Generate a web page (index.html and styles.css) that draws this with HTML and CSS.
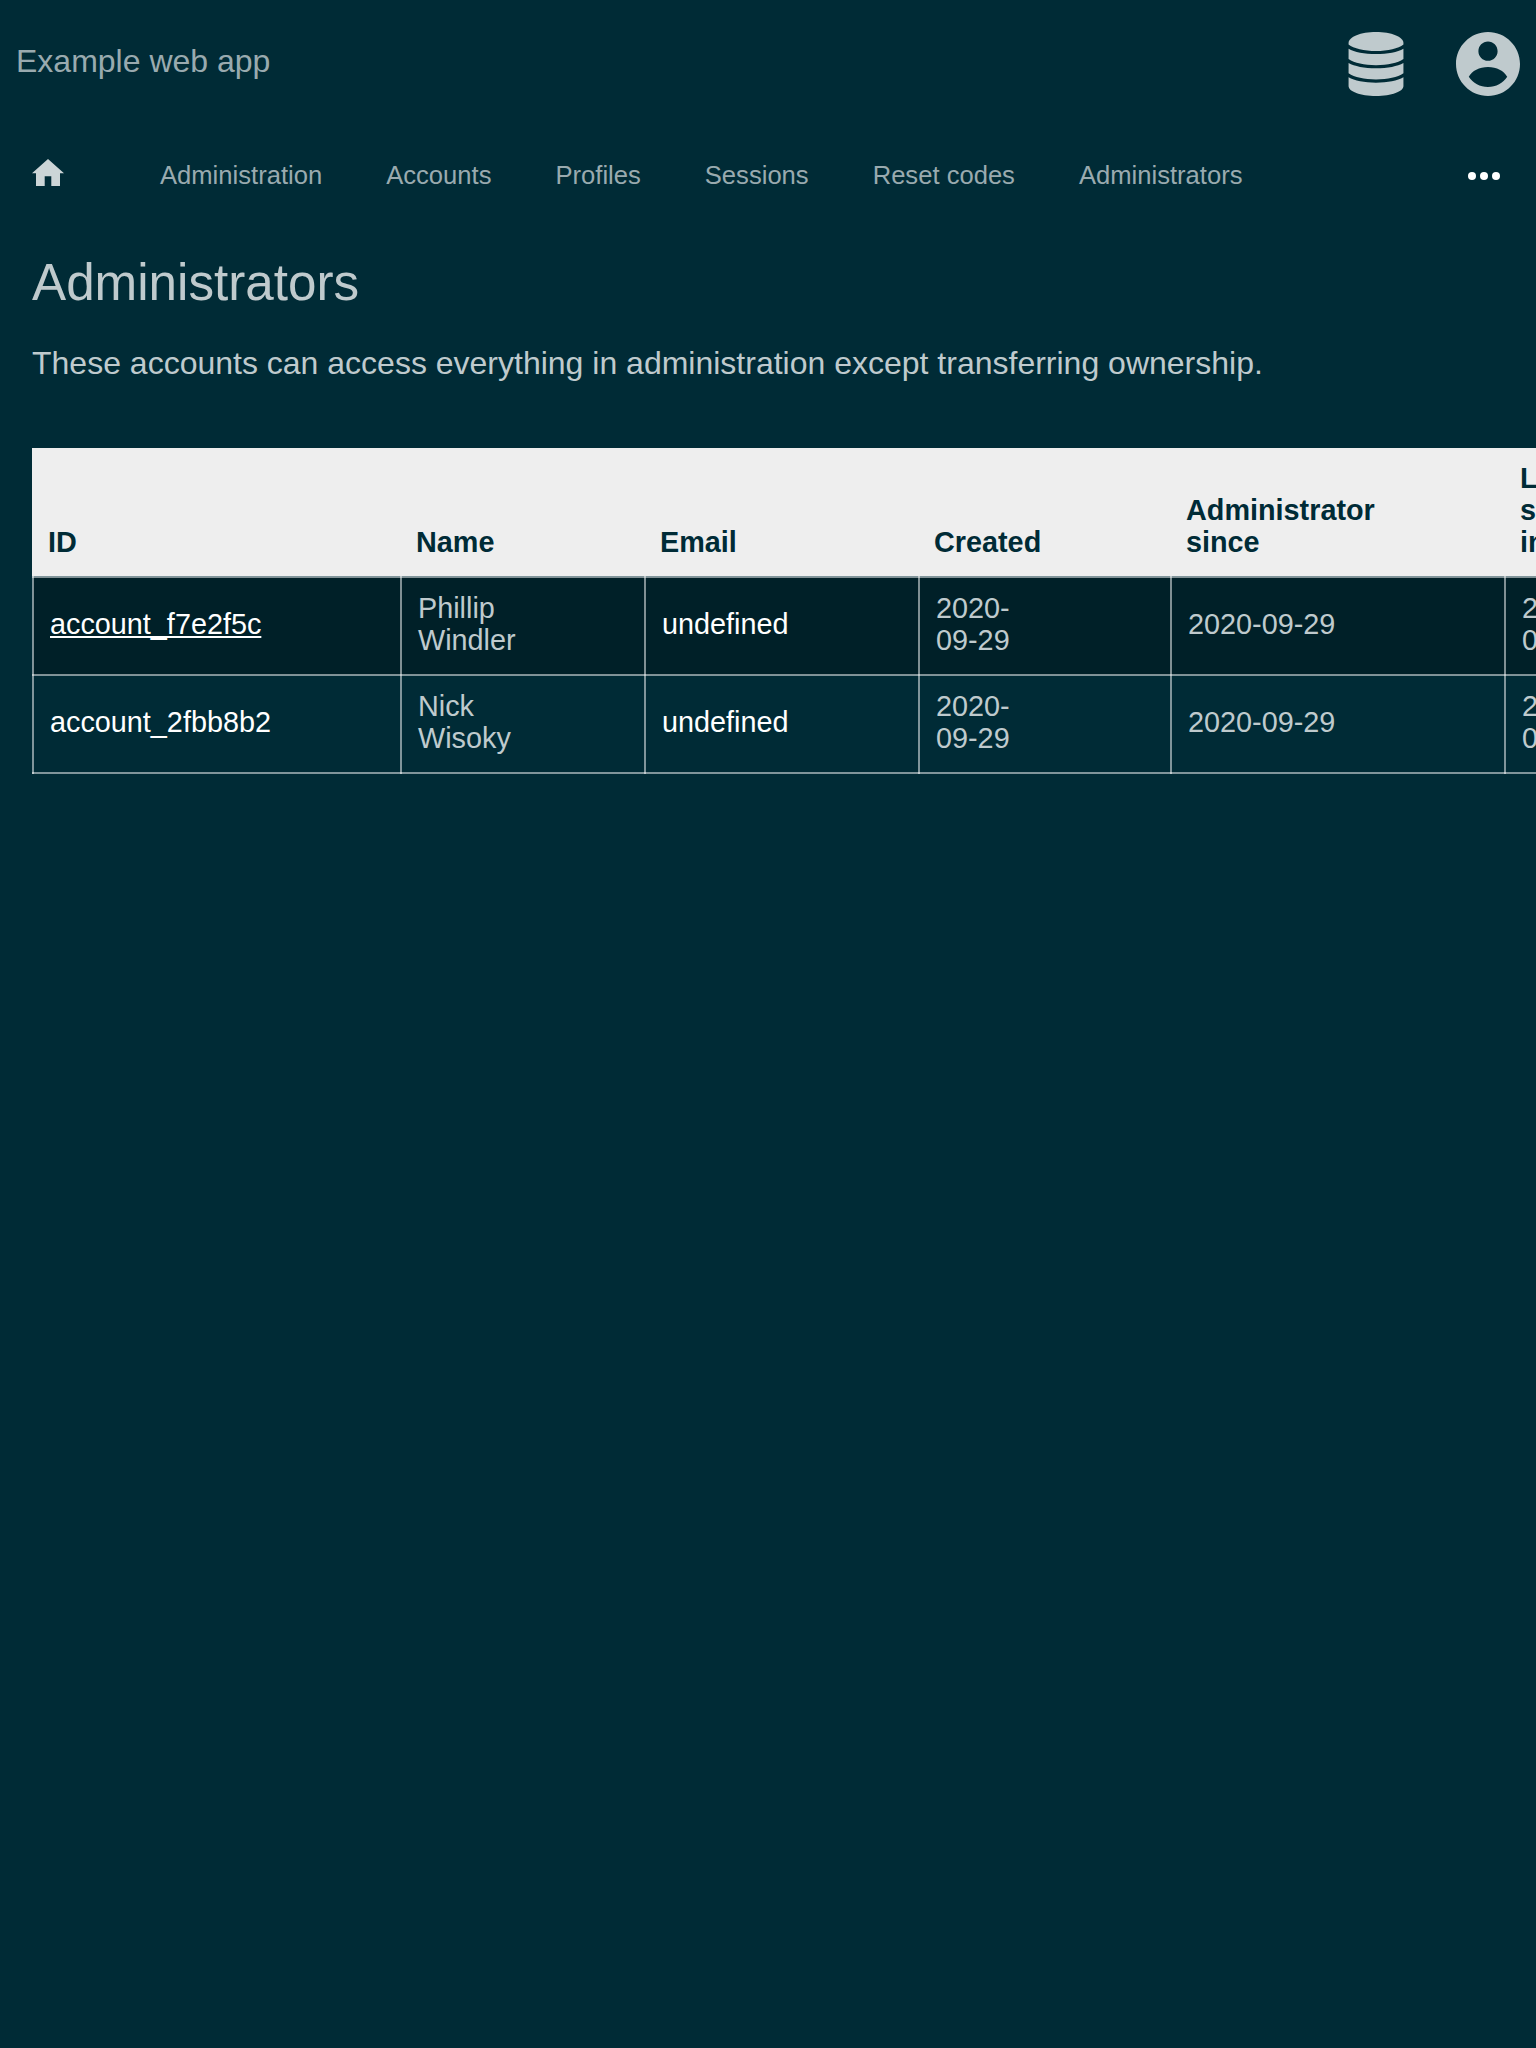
FILE: index.html
```html
<!DOCTYPE html>
<html lang="en">
<head>
<meta charset="utf-8">
<title>Administrators</title>
<link rel="stylesheet" href="styles.css">
</head>
<body>
<header class="header">
  <a class="brand">Example web app</a>
  <div class="menus">
    <svg class="icon-database" viewBox="-0.580 0 57.160 64" preserveAspectRatio="none"><path d="M0 11C0 4.800 12.500 0 28 0S56 4.800 56 11V12.500C51 16.500 40 19 28 19S5 16.500 0 12.500Z"/><path d="M0 16.700C6 20 16 22 28 22S50 20 56 16.700V27C50 31 40 33.200 28 33.200S6 31 0 27Z"/><path d="M0 31C6 34.300 16 36.300 28 36.300S50 34.300 56 31V41.300C50 45.300 40 47.500 28 47.500S6 45.300 0 41.300Z"/><path d="M0 45.300C6 48.700 16 50.700 28 50.700S50 48.700 56 45.300V54C56 59.500 44 64 28 64S0 59.500 0 54Z"/></svg>
    <svg class="icon-account" viewBox="2 2 20 20"><path d="M12 2C6.480 2 2 6.480 2 12s4.480 10 10 10 10-4.480 10-10S17.520 2 12 2zm0 3c1.660 0 3 1.340 3 3s-1.340 3-3 3-3-1.340-3-3 1.340-3 3-3zm0 14.200c-2.500 0-4.710-1.280-6-3.220 1-1.900 3.300-3.080 6-3.080s5 1.180 6 3.080c-1.290 1.940-3.500 3.220-6 3.220z"/></svg>
  </div>
</header>
<nav class="navbar">
  <svg class="icon-home" viewBox="0 0 32 27"><path d="M16 0L32 14.200H28V27H19.300V17.300H12.700V27H4V14.200H0z"/></svg>
  <a>Administration</a>
  <a>Accounts</a>
  <a>Profiles</a>
  <a>Sessions</a>
  <a>Reset codes</a>
  <a>Administrators</a>
  <svg class="icon-more" viewBox="0 0 32 8"><circle cx="4" cy="4" r="4"/><circle cx="16" cy="4" r="4"/><circle cx="28" cy="4" r="4"/></svg>
</nav>
<main class="content">
  <h1>Administrators</h1>
  <p>These accounts can access everything in administration except transferring ownership.</p>
  <div class="list-wrap">
  <table class="list">
    <colgroup><col class="col-id"><col class="col-name"><col class="col-email"><col class="col-created"><col class="col-since"><col class="col-last"></colgroup>
    <thead>
      <tr><th>ID</th><th>Name</th><th>Email</th><th>Created</th><th>Administrator since</th><th>Last signed in</th></tr>
    </thead>
    <tbody>
      <tr class="active"><td><a class="current">account_f7e2f5c</a></td><td>Phillip Windler</td><td><a>undefined</a></td><td>2020-09-29</td><td>2020-09-29</td><td>2020-09-29</td></tr>
      <tr><td><a>account_2fbb8b2</a></td><td>Nick Wisoky</td><td><a>undefined</a></td><td>2020-09-29</td><td>2020-09-29</td><td>2020-09-29</td></tr>
    </tbody>
  </table>
  </div>
</main>
</body>
</html>
```
FILE: styles.css
```css
* { box-sizing: border-box; }
html { overflow: hidden; background: #002b36; }
body {
  margin: 0;
  min-height: 2048px;
  overflow: hidden;
  background: #002b36;
  color: #bfcacd;
  font: 32px/40px "Liberation Sans", Arial, sans-serif;
}
svg { display: block; flex: none; fill: #bfcacd; }
.header {
  display: flex;
  justify-content: space-between;
  height: 128px;
  padding: 32px 16px;
}
.brand { padding-top: 9px; color: #99aaaf; }
.menus { display: flex; gap: 52px; }
.icon-database { width: 56px; height: 64px; }
.icon-account { width: 64px; height: 64px; }
.navbar {
  display: flex;
  align-items: center;
  gap: 64px;
  height: 96px;
  padding: 0 36px 0 32px;
  color: #99aaaf;
  font-size: 25.6px;
  line-height: 32px;
}
.navbar a { padding-bottom: 2px; }
.icon-home { width: 32px; height: 27px; margin: -7px 32px 0 0; fill: #ccd5d7; }
.icon-more { width: 32px; height: 8px; margin-left: auto; fill: #fff; }
.content { padding: 29px 0 0 32px; }
h1 { margin: 0; font-size: 51.2px; font-weight: 400; line-height: 60px; }
p { margin: 30px 0 65px; }
.list-wrap { overflow: hidden; }
.list {
  width: 1700px;
  table-layout: fixed;
  border-collapse: collapse;
  font-size: 28.8px;
  line-height: 32px;
}
.col-id { width: 368px; }
.col-name { width: 244px; }
.col-email { width: 274px; }
.col-created { width: 252px; }
.col-since { width: 334px; }
th {
  padding: 14px 96px 18px 15px;
  background: linear-gradient(#eee, #eee) no-repeat 0 0 / 100% 128px;
  color: #002b36;
  text-align: left;
  vertical-align: bottom;
}
th:first-child { box-shadow: -1px -1px 0 #eee; }
td {
  padding: 14px 112px 18px 16px;
  border: 2px solid rgba(255, 255, 255, .5);
}
td a { color: #fff; }
td:nth-child(4) { padding-right: 140px; }
td:nth-child(5), td:last-child { padding-right: 96px; }
.active { background: #002028; }
.current { text-decoration: underline; text-decoration-skip-ink: none; }
```
